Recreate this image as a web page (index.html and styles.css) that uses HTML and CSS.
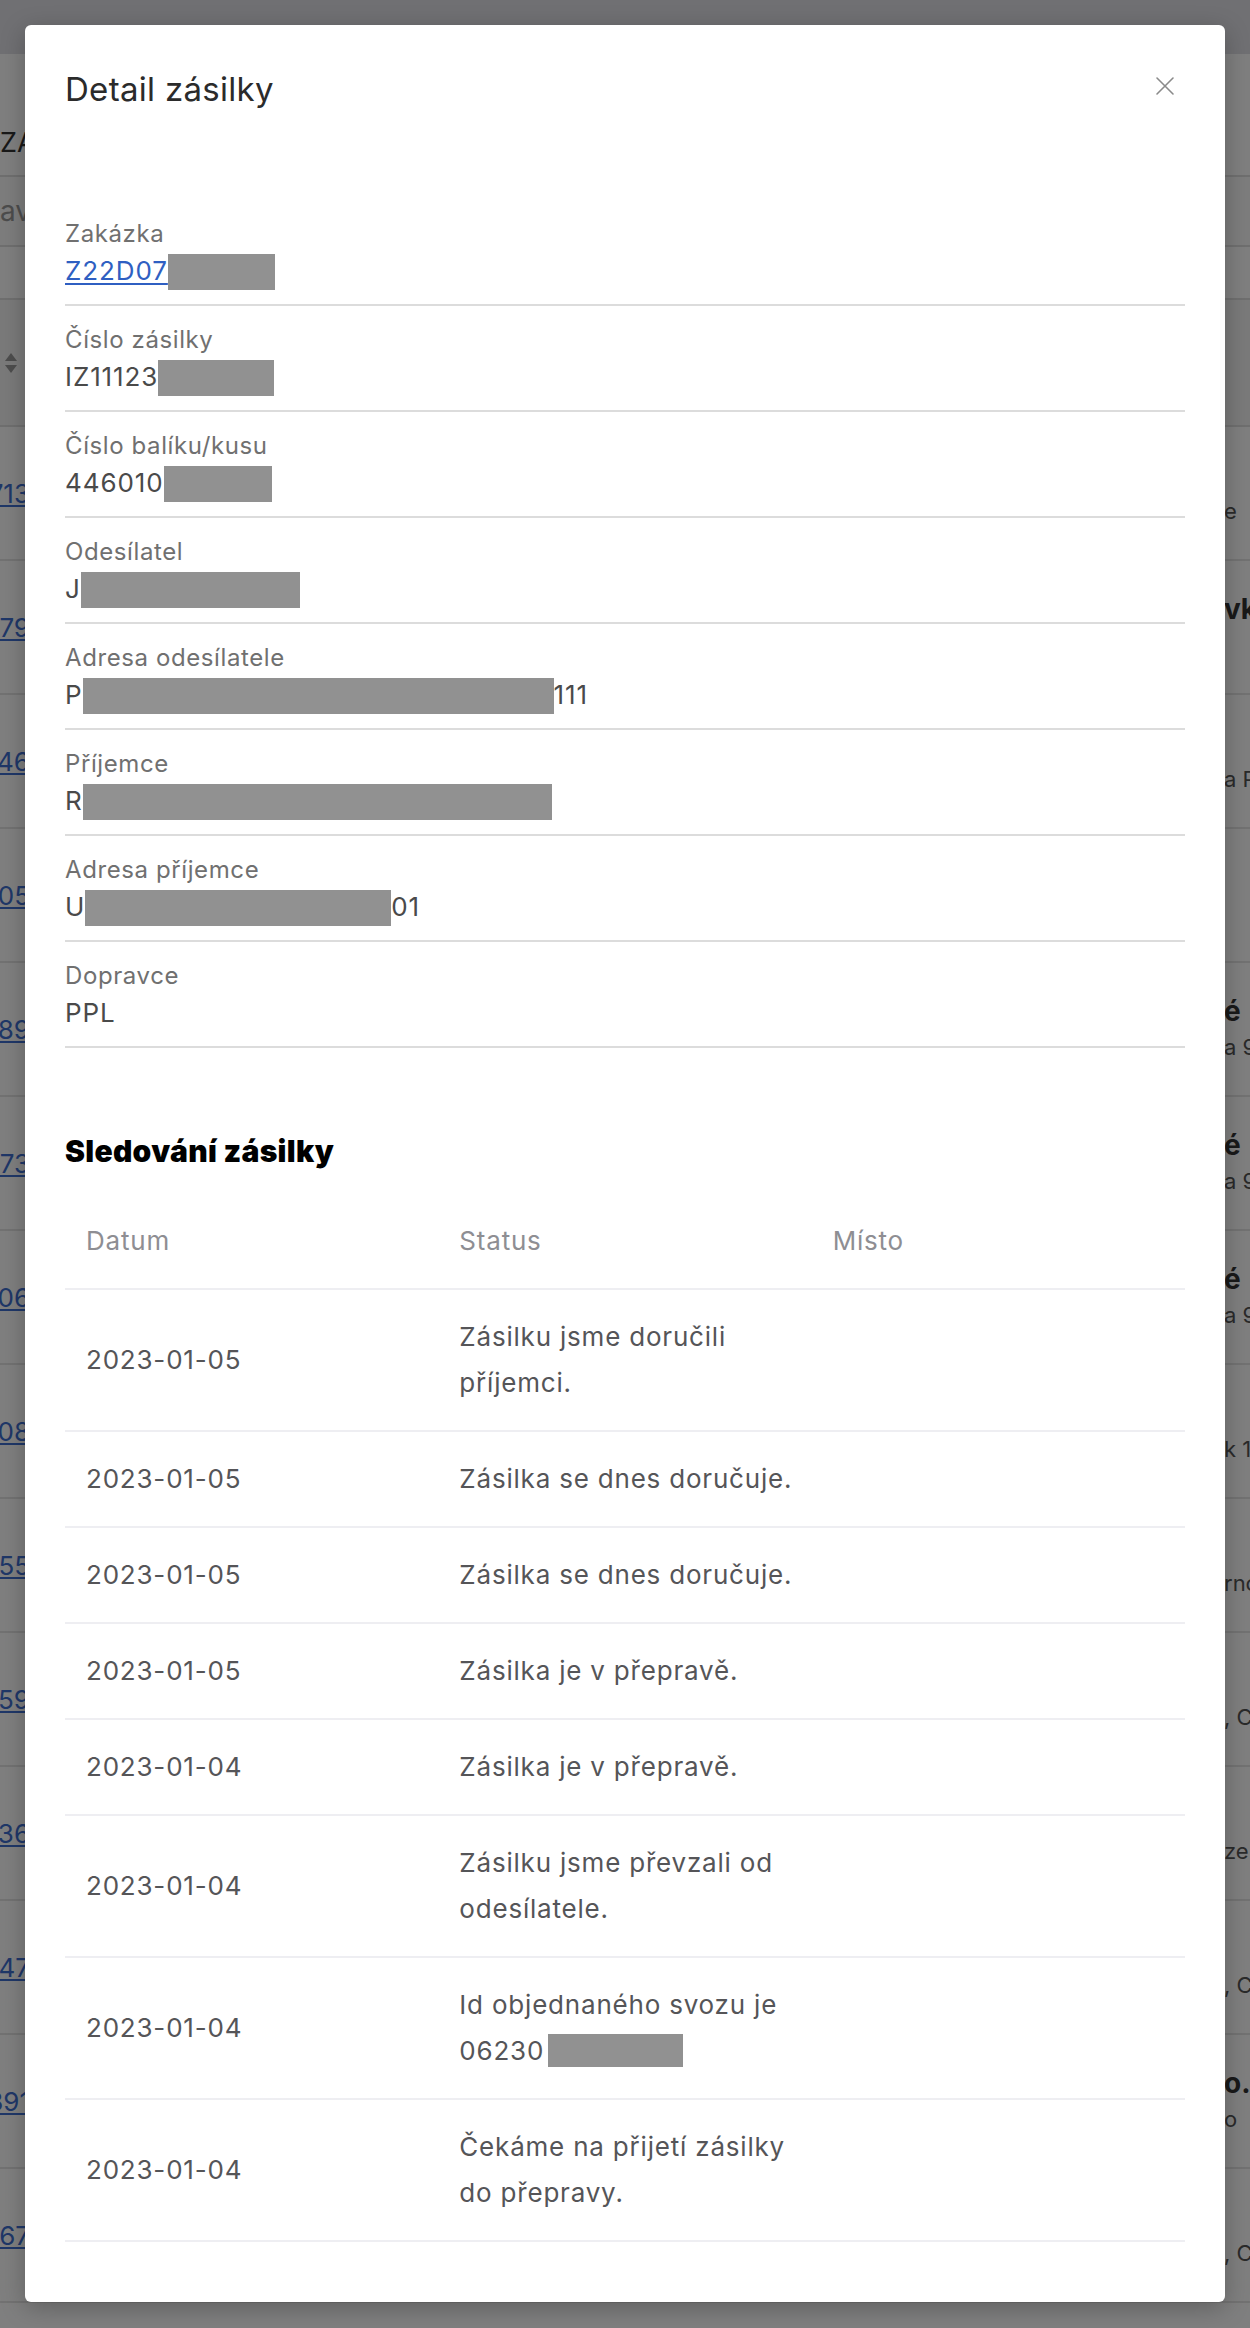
FILE: index.html
```html
<!DOCTYPE html>
<html lang="cs">
<head>
<meta charset="utf-8">
<title>Detail zásilky</title>
<link rel="stylesheet" href="styles.css">
</head>
<body>
<div class="page">
  <div class="topbar"></div>
  <div class="page-head">ZÁSILKY</div>
  <div class="filter"><span>avizo</span></div>
  <div class="gap"></div>
  <div class="thead">
    <svg class="sort" width="14" height="24" viewBox="0 0 14 24"><path d="M7 2 L13 10 H1 Z" fill="#9a9a9a"/><path d="M7 22 L13 14 H1 Z" fill="#9a9a9a"/></svg>
  </div>
  <div class="rows">
    <div class="brow"><div class="bl"><a>Z22D0713</a></div><div class="bm"></div><div class="br"><b>&nbsp;</b><span>e</span></div></div>
    <div class="brow"><div class="bl"><a>Z22D079</a></div><div class="bm"></div><div class="br"><b>vk</b><span>&nbsp;</span></div></div>
    <div class="brow"><div class="bl"><a>Z22D046</a></div><div class="bm"></div><div class="br"><b>&nbsp;</b><span>a P</span></div></div>
    <div class="brow"><div class="bl"><a>Z22D0905</a></div><div class="bm"></div><div class="br"><b>&nbsp;</b><span>&nbsp;</span></div></div>
    <div class="brow"><div class="bl"><a>Z22D1889</a></div><div class="bm"></div><div class="br"><b>é</b><span>a 9</span></div></div>
    <div class="brow"><div class="bl"><a>Z22D1873</a></div><div class="bm"></div><div class="br"><b>é</b><span>a 9</span></div></div>
    <div class="brow"><div class="bl"><a>Z22D1806</a></div><div class="bm"></div><div class="br"><b>é</b><span>a 9</span></div></div>
    <div class="brow"><div class="bl"><a>Z22D0008</a></div><div class="bm"></div><div class="br"><b>&nbsp;</b><span>k 1</span></div></div>
    <div class="brow"><div class="bl"><a>Z22D0755</a></div><div class="bm"></div><div class="br"><b>&nbsp;</b><span>rno</span></div></div>
    <div class="brow"><div class="bl"><a>Z22D0859</a></div><div class="bm"></div><div class="br"><b>&nbsp;</b><span>, C</span></div></div>
    <div class="brow"><div class="bl"><a>Z22D0836</a></div><div class="bm"></div><div class="br"><b>&nbsp;</b><span>ze</span></div></div>
    <div class="brow"><div class="bl"><a>Z22D1847</a></div><div class="bm"></div><div class="br"><b>&nbsp;</b><span>, C</span></div></div>
    <div class="brow"><div class="bl"><a>Z22D0891</a></div><div class="bm"></div><div class="br"><b>o.</b><span>o</span></div></div>
    <div class="brow"><div class="bl"><a>Z22D0967</a></div><div class="bm"></div><div class="br"><b>&nbsp;</b><span>, C</span></div></div>
  </div>
</div>
<div class="overlay"></div>
<div class="modal">
  <div class="modal-head">
    <h2 class="modal-title">Detail zásilky</h2>
    <button class="close" aria-label="Zavřít">
      <svg width="20" height="20" viewBox="0 0 20 20"><path d="M2 2 L18 18 M18 2 L2 18" stroke="#8a8a8a" stroke-width="1.6" stroke-linecap="round" fill="none"/></svg>
    </button>
  </div>
  <dl class="fields">
    <div class="field"><dt>Zakázka</dt><dd><a class="link" href="#">Z22D07</a><span class="redact w-zak"></span></dd></div>
    <div class="field"><dt>Číslo zásilky</dt><dd>IZ11123<span class="redact w-izs"></span></dd></div>
    <div class="field"><dt>Číslo balíku/kusu</dt><dd>446010<span class="redact w-bal"></span></dd></div>
    <div class="field"><dt>Odesílatel</dt><dd>J<span class="redact w-ode"></span></dd></div>
    <div class="field"><dt>Adresa odesílatele</dt><dd>P<span class="redact w-aod"></span>111</dd></div>
    <div class="field"><dt>Příjemce</dt><dd>R<span class="redact w-pri"></span></dd></div>
    <div class="field"><dt>Adresa příjemce</dt><dd>U<span class="redact w-apr"></span>01</dd></div>
    <div class="field"><dt>Dopravce</dt><dd>PPL</dd></div>
  </dl>
  <h3 class="track-title">Sledování zásilky</h3>
  <table class="track">
    <thead>
      <tr><th>Datum</th><th>Status</th><th>Místo</th></tr>
    </thead>
    <tbody>
      <tr><td>2023-01-05</td><td>Zásilku jsme doručili příjemci.</td><td></td></tr>
      <tr><td>2023-01-05</td><td>Zásilka se dnes doručuje.</td><td></td></tr>
      <tr><td>2023-01-05</td><td>Zásilka se dnes doručuje.</td><td></td></tr>
      <tr><td>2023-01-05</td><td>Zásilka je v přepravě.</td><td></td></tr>
      <tr><td>2023-01-04</td><td>Zásilka je v přepravě.</td><td></td></tr>
      <tr><td>2023-01-04</td><td>Zásilku jsme převzali od odesílatele.</td><td></td></tr>
      <tr><td>2023-01-04</td><td>Id objednaného svozu je 06230<span class="redact-t"></span></td><td></td></tr>
      <tr><td>2023-01-04</td><td>Čekáme na přijetí zásilky do přepravy.</td><td></td></tr>
    </tbody>
  </table>
</div>
</body>
</html>
```

FILE: styles.css
```css
* { box-sizing: border-box; }
html, body { margin: 0; padding: 0; }
body {
  width: 1250px;
  height: 2328px;
  overflow: hidden;
  position: relative;
  font-family: Inter, "Noto Sans", "Liberation Sans", sans-serif;
  background: #ffffff;
}

/* ---------- background page ---------- */
.page { width: 1250px; height: 2328px; overflow: hidden; }
.topbar { height: 54px; background: #e0e0e6; }
.page-head {
  height: 123px;
  display: flex;
  align-items: flex-end;
  padding: 0 0 16px 0;
  font-size: 27px;
  color: #333;
  border-bottom: 2px solid #dedede;
}
.filter {
  height: 70px;
  display: flex;
  align-items: center;
  font-size: 28px;
  color: #999;
  border-bottom: 2px solid #dedede;
  background: #fafafa;
}
.gap { height: 53px; border-bottom: 2px solid #dedede; }
.thead {
  height: 127px;
  background: #f4f4f4;
  display: flex;
  align-items: center;
  padding-left: 4px;
  border-bottom: 2px solid #dedede;
}
.brow {
  height: 134px;
  display: grid;
  grid-template-columns: 30px 1fr 26px;
  border-bottom: 2px solid #e4e4e4;
}
.bl { display: flex; justify-content: flex-end; align-items: center; }
.bl a {
  white-space: nowrap;
  font-size: 26px;
  color: #3e6fd0;
  text-decoration: underline;
}
.br {
  display: flex;
  flex-direction: column;
  justify-content: center;
  white-space: nowrap;
  line-height: 36px;
}
.br b { font-size: 28px; color: #333; font-weight: 700; }
.br span { font-size: 22px; color: #555; }

.overlay {
  position: absolute;
  inset: 0;
  background: rgba(0, 0, 0, 0.5);
}

/* ---------- modal ---------- */
.modal {
  position: absolute;
  top: 25px;
  left: 25px;
  width: 1200px;
  background: #fff;
  border-radius: 6px;
  box-shadow: 0 6px 24px rgba(0, 0, 0, 0.25);
  padding: 40px 40px 60px 40px;
}
.modal-head {
  display: flex;
  justify-content: space-between;
  align-items: center;
  height: 48px;
  margin-bottom: 87px;
}
.modal-title {
  margin: 0;
  font-size: 33px;
  line-height: 48px;
  letter-spacing: 0.3px;
  font-weight: 400;
  color: #2b2b2b;
}
.close {
  width: 20px;
  height: 20px;
  padding: 0;
  margin: -6px 10px 0 0;
  border: 0;
  background: none;
  display: flex;
}

.fields { margin: 0; }
.field {
  padding: 16px 0 14px 0;
  border-bottom: 2px solid #dcdcdc;
}
.field dt {
  font-size: 24px;
  line-height: 36px;
  letter-spacing: 0.6px;
  color: #707070;
}
.field dd {
  margin: 0;
  font-size: 26px;
  line-height: 38px;
  letter-spacing: 0.9px;
  color: #4a4a4a;
  white-space: nowrap;
}
.link { color: #2f5fc2; text-decoration: underline; text-underline-offset: 3px; }
.redact {
  display: inline-block;
  height: 36px;
  margin-top: 2px;
  vertical-align: top;
  background: #919191;
}
.w-zak { width: 107px; }
.w-izs { width: 116px; }
.w-bal { width: 108px; }
.w-ode { width: 219px; }
.w-aod { width: 471px; }
.w-pri { width: 469px; }
.w-apr { width: 306px; }

.track-title {
  margin: 85px 0 25px 0;
  font-size: 30px;
  line-height: 36px;
  letter-spacing: 0.3px;
  font-weight: 900;
  color: #000;
}
.track {
  width: 100%;
  table-layout: fixed;
  border-collapse: collapse;
}
.track th,
.track td {
  text-align: left;
  vertical-align: middle;
  padding: 24px 8px 24px 21px;
  line-height: 46px;
  font-size: 26px;
  letter-spacing: 0.8px;
  border-bottom: 2px solid #eeeef2;
}
.track th { font-weight: 400; color: #8e8e93; }
.track td { color: #555558; }
.redact-t {
  display: inline-block;
  width: 135px;
  height: 33px;
  margin-left: 4px;
  vertical-align: -7px;
  background: #919191;
}
```
